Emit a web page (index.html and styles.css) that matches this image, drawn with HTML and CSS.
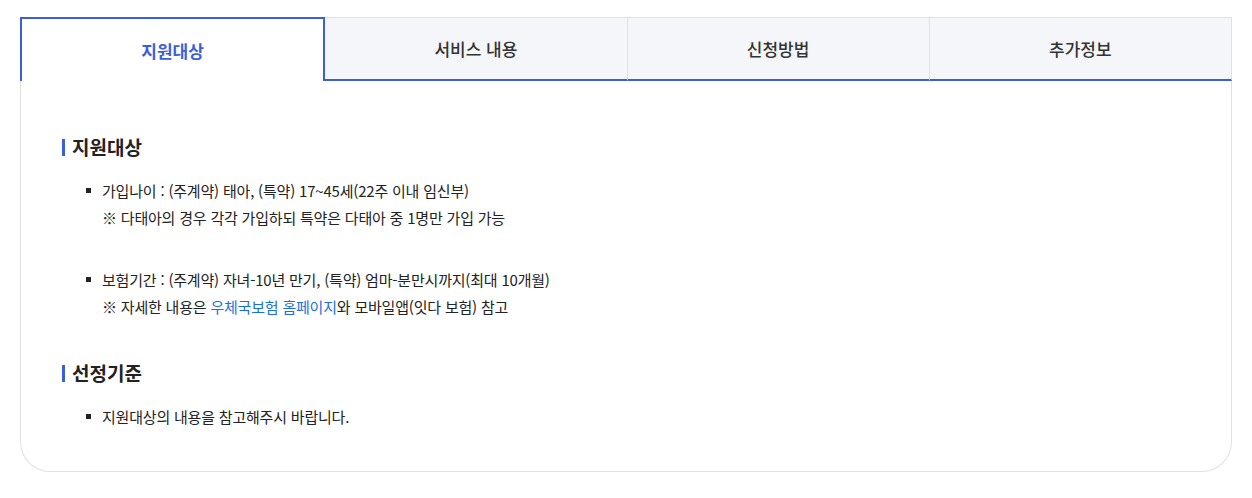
FILE: index.html
```html
<!DOCTYPE html>
<html lang="ko">
<head>
    <meta charset="UTF-8">
    <meta name="viewport" content="width=device-width, initial-scale=1.0">
    <title>지원대상</title>
    <link rel="stylesheet" href="styles.css">
</head>
<body>
    <div class="info-box">
        <ul class="tabs">
            <li class="tab active">지원대상</li>
            <li class="tab">서비스 내용</li>
            <li class="tab">신청방법</li>
            <li class="tab">추가정보</li>
        </ul>

        <div class="tab-body">
            <h3 class="sec-title">지원대상</h3>
            <ul class="dot-list">
                <li>
                    가입나이 : (주계약) 태아, (특약) 17~45세(22주 이내 임신부)<br>
                    ※ 다태아의 경우 각각 가입하되 특약은 다태아 중 1명만 가입 가능
                </li>
                <li>
                    보험기간 : (주계약) 자녀-10년 만기, (특약) 엄마-분만시까지(최대 10개월)<br>
                    ※ 자세한 내용은 <a href="#">우체국보험 홈페이지</a>와 모바일앱(잇다 보험) 참고
                </li>
            </ul>

            <h3 class="sec-title">선정기준</h3>
            <ul class="dot-list">
                <li>지원대상의 내용을 참고해주시 바랍니다.</li>
            </ul>
        </div>
    </div>
</body>
</html>
```

FILE: styles.css
```css
:root {
    --main-blue: #3b5fd9;
    --line-color: #e1e1e1;
    --tab-bg: #f5f6fa;
    --text-color: #222;
}

body {
    margin: 0;
    padding: 17px 20px 0 21px;
    font-family: 'Noto Sans CJK KR', 'Noto Sans', sans-serif;
    color: var(--text-color);
    background: #fff;
}

.info-box {
    border: 1px solid var(--line-color);
    border-top: none;
    border-radius: 0 0 30px 30px;
    margin-left: -1px;
}

.tabs {
    display: flex;
    list-style: none;
    margin: 0 -1px 0 -1px;
    padding: 0;
}

.tab {
    flex: 1;
    height: 61px;
    display: flex;
    align-items: center;
    justify-content: center;
    background: var(--tab-bg);
    border-top: 1px solid var(--line-color);
    border-left: 1px solid var(--line-color);
    border-bottom: 2px solid var(--main-blue);
    font-size: 17px;
    font-weight: 500;
    color: #333;
}

.tab:last-child {
    border-right: 1px solid var(--line-color);
}

.tab.active {
    background: #fff;
    border: 2px solid var(--main-blue);
    border-bottom: none;
    height: 62px;
    color: var(--main-blue);
    font-weight: 700;
}

.tab.active + .tab {
    border-left: none;
}

.tab-body {
    padding: 52px 40px 41px 40px;
}

.sec-title {
    position: relative;
    margin: 0;
    padding-left: 11px;
    font-size: 19px;
    line-height: 28px;
    font-weight: 700;
}

.sec-title::before {
    content: "";
    position: absolute;
    left: 1px;
    top: 6px;
    width: 3px;
    height: 17px;
    background: var(--main-blue);
}

.dot-list {
    list-style: none;
    margin: 16px 0 39px 0;
    padding: 0;
}

.dot-list:last-child {
    margin-bottom: 0;
}

.dot-list li {
    position: relative;
    padding-left: 41px;
    font-size: 15px;
    line-height: 27px;
    letter-spacing: -0.2px;
}

.dot-list li + li {
    margin-top: 35px;
}

.dot-list li::before {
    content: "";
    position: absolute;
    left: 25px;
    top: 11px;
    width: 5px;
    height: 5px;
    background: #222;
}

.dot-list a {
    color: #1a6fe0;
    text-decoration: none;
}
```
